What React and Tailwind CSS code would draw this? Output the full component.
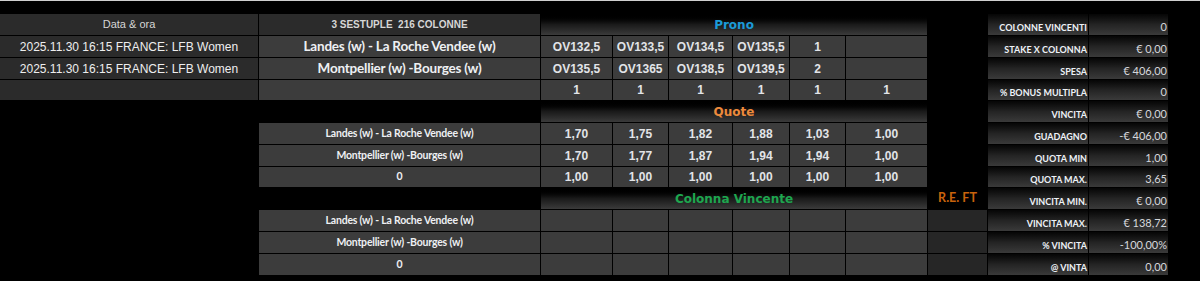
import React from "react";

const ARIAL = "font-['Liberation_Sans',Arial,sans-serif]";
const CAL = "font-['Lato','Open_Sans',sans-serif]";
const VERD = "font-['DejaVu_Sans',Verdana,sans-serif]";

const GRAD = "bg-linear-to-b from-[#000000] via-[#1a1a1a] to-[#3b3b3b]";
const RGRAD = "bg-linear-to-b from-[#060606] via-[#242424] to-[#3a3a3a]";

function Blank() {
  return <div />;
}

function Cell({ children, className = "" }) {
  return (
    <div className={`flex items-center justify-center bg-[#3c3c3c] ${className}`}>{children}</div>
  );
}

function Num({ v }) {
  return <Cell className={`${ARIAL} font-bold text-[12px] text-[#e2e4e8]`}>{v}</Cell>;
}

function Team({ t }) {
  return <Cell className={`${CAL} font-bold text-[10.5px] text-[#eef0f3] tracking-[-0.2px]`}>{t}</Cell>;
}

function Header({ text, color, span = "col-span-6" }) {
  return (
    <div className={`${span} flex items-center justify-center ${GRAD}`}>
      <span className={`${VERD} font-bold text-[12px] ${color}`}>{text}</span>
    </div>
  );
}

function RLabel({ t }) {
  return (
    <div className={`flex items-end justify-end pr-[1px] pb-[3px] ${RGRAD}`}>
      <span className={`${CAL} font-bold text-[9px] leading-none text-[#eef2f7] uppercase`}>{t}</span>
    </div>
  );
}

function RValue({ t }) {
  return (
    <div className={`flex items-end justify-end pr-[1px] pb-[3px] ${RGRAD}`}>
      <span className={`${CAL} text-[11px] leading-none text-[#d6d8dc]`}>{t}</span>
    </div>
  );
}

const TEAM1 = "Landes (w) - La Roche Vendee (w)";
const TEAM2 = "Montpellier (w) -Bourges (w)";
const DATE = "2025.11.30 16:15 FRANCE: LFB Women";

const right = [
  ["COLONNE VINCENTI", "0"],
  ["STAKE X COLONNA", "€ 0,00"],
  ["SPESA", "€ 406,00"],
  ["% BONUS MULTIPLA", "0"],
  ["VINCITA", "€ 0,00"],
  ["GUADAGNO", "-€ 406,00"],
  ["QUOTA MIN", "1,00"],
  ["QUOTA MAX.", "3,65"],
  ["VINCITA MIN.", "€ 0,00"],
  ["VINCITA MAX.", "€ 138,72"],
  ["% VINCITA", "-100,00%"],
  ["@ VINTA", "0,00"],
];

function RightPair({ i }) {
  return (
    <>
      <RLabel t={right[i][0]} />
      <RValue t={right[i][1]} />
      <Blank />
    </>
  );
}

function DarkLeft({ children, className = "" }) {
  return (
    <div className={`flex items-center justify-center bg-[#2b2b2b] ${className}`}>{children}</div>
  );
}

function TopTeam({ t }) {
  return (
    <Cell className={`${CAL} font-bold text-[13.5px] text-[#eef0f3] tracking-[-0.2px]`}>{t}</Cell>
  );
}

export default function App() {
  return (
    <div className="w-[1200px] h-[281px] bg-black overflow-hidden">
      <div className="h-px bg-[#d0d0d0]" />
      <div className="h-[13px]" />
      <div className="grid grid-cols-[258px_281px_71px_55px_63px_56px_55px_81px_59px_100px_79px_1fr] grid-rows-[21px_21px_21px_20px_21px_21px_21px_20px_21px_21px_21px_21px] gap-px bg-black">
        {/* Row 1 */}
        <DarkLeft className={`${ARIAL} text-[11px] text-[#d6d6d6]`}>Data &amp; ora</DarkLeft>
        <DarkLeft className={`${ARIAL} font-bold text-[10px] text-[#d6d6d6] whitespace-pre`}>3 SESTUPLE  216 COLONNE</DarkLeft>
        <Header text="Prono" color="text-[#1b9ad8]" />
        <Blank />
        <RightPair i={0} />

        {/* Row 2 */}
        <DarkLeft className={`${ARIAL} text-[12px] text-[#eeeeee]`}>{DATE}</DarkLeft>
        <TopTeam t={TEAM1} />
        <Num v="OV132,5" />
        <Num v="OV133,5" />
        <Num v="OV134,5" />
        <Num v="OV135,5" />
        <Num v="1" />
        <Cell />
        <Blank />
        <RightPair i={1} />

        {/* Row 3 */}
        <DarkLeft className={`${ARIAL} text-[12px] text-[#eeeeee]`}>{DATE}</DarkLeft>
        <TopTeam t={TEAM2} />
        <Num v="OV135,5" />
        <Num v="OV1365" />
        <Num v="OV138,5" />
        <Num v="OV139,5" />
        <Num v="2" />
        <Cell />
        <Blank />
        <RightPair i={2} />

        {/* Row 4 */}
        <DarkLeft />
        <Cell />
        <Num v="1" />
        <Num v="1" />
        <Num v="1" />
        <Num v="1" />
        <Num v="1" />
        <Num v="1" />
        <Blank />
        <RightPair i={3} />

        {/* Row 5 */}
        <Blank />
        <Blank />
        <Header text="Quote" color="text-[#ec8a3c]" />
        <Blank />
        <RightPair i={4} />

        {/* Row 6 */}
        <Blank />
        <Team t={TEAM1} />
        <Num v="1,70" />
        <Num v="1,75" />
        <Num v="1,82" />
        <Num v="1,88" />
        <Num v="1,03" />
        <Num v="1,00" />
        <Blank />
        <RightPair i={5} />

        {/* Row 7 */}
        <Blank />
        <Team t={TEAM2} />
        <Num v="1,70" />
        <Num v="1,77" />
        <Num v="1,87" />
        <Num v="1,94" />
        <Num v="1,94" />
        <Num v="1,00" />
        <Blank />
        <RightPair i={6} />

        {/* Row 8 */}
        <Blank />
        <Team t="0" />
        <Num v="1,00" />
        <Num v="1,00" />
        <Num v="1,00" />
        <Num v="1,00" />
        <Num v="1,00" />
        <Num v="1,00" />
        <Blank />
        <RightPair i={7} />

        {/* Row 9 */}
        <Blank />
        <Blank />
        <Header text="Colonna Vincente" color="text-[#1ea64f]" />
        <div className="flex items-center justify-center bg-black">
          <span className={`${CAL} font-bold text-[12.5px] text-[#c8630c]`}>R.E. FT</span>
        </div>
        <RightPair i={8} />

        {/* Rows 10-12 */}
        {[TEAM1, TEAM2, "0"].map((t, k) => (
          <React.Fragment key={k}>
            <Blank />
            <Team t={t} />
            <Cell />
            <Cell />
            <Cell />
            <Cell />
            <Cell />
            <Cell />
            <div className="bg-[#262626]" />
            <RightPair i={9 + k} />
          </React.Fragment>
        ))}
      </div>
    </div>
  );
}
